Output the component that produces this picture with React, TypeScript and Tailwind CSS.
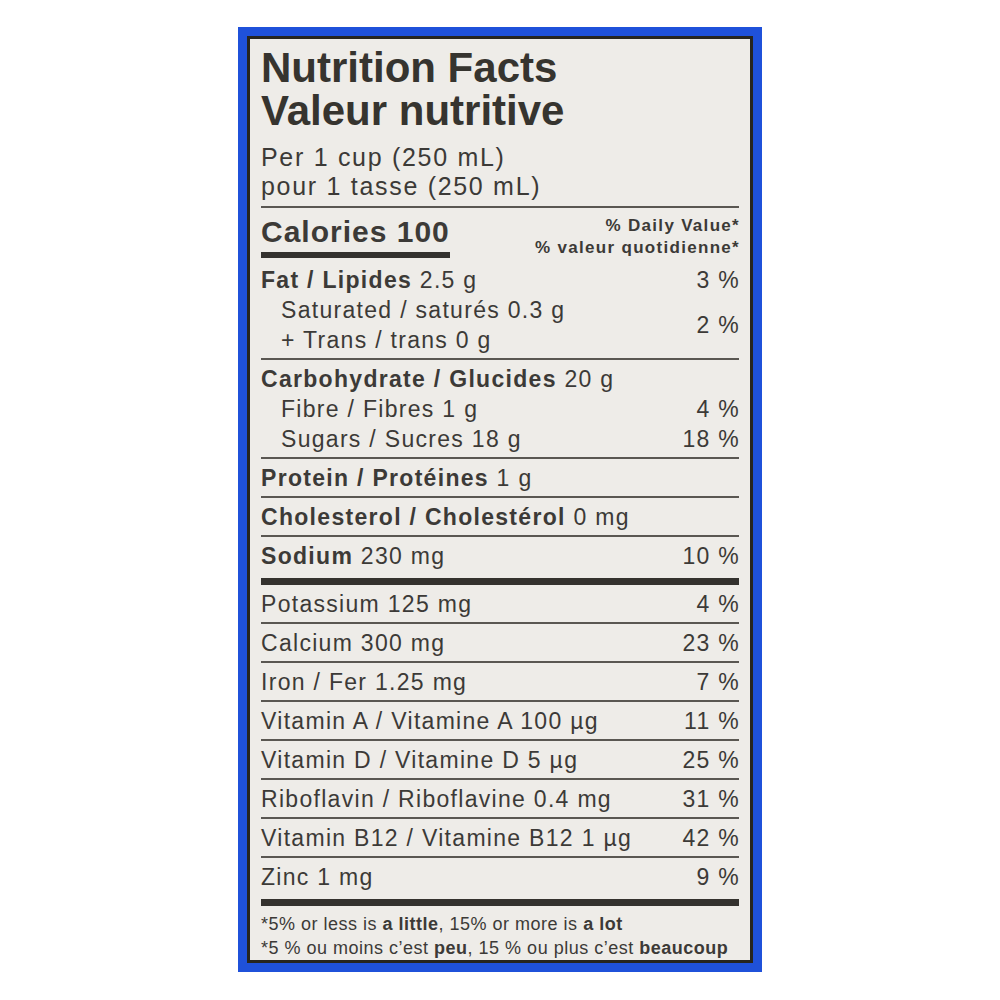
import React from 'react';

type Nutrient = {
  label: string;
  dv?: string;
};

const minerals: Nutrient[] = [
  { label: 'Potassium 125 mg', dv: '4 %' },
  { label: 'Calcium 300 mg', dv: '23 %' },
  { label: 'Iron / Fer 1.25 mg', dv: '7 %' },
  { label: 'Vitamin A / Vitamine A 100 µg', dv: '11 %' },
  { label: 'Vitamin D / Vitamine D 5 µg', dv: '25 %' },
  { label: 'Riboflavin / Riboflavine 0.4 mg', dv: '31 %' },
  { label: 'Vitamin B12 / Vitamine B12 1 µg', dv: '42 %' },
];

const body = 'text-[23px] leading-[30px] tracking-[1.3px]';

function Row({ children, dv, thick }: { children: React.ReactNode; dv?: string; thick?: boolean }) {
  return (
    <div
      className={
        thick
          ? 'flex justify-between pt-[4px] pb-[7px] border-b-[7px] border-[#34322e]'
          : 'flex justify-between pt-[4px] pb-[3px] border-b-2 border-[#5a5752]'
      }
    >
      <div className={body}>{children}</div>
      {dv && <div className={`${body} text-right -mr-[1px]`}>{dv}</div>}
    </div>
  );
}

export default function App() {
  return (
    <div className="min-h-screen bg-white flex justify-center pt-[27px] font-['Liberation_Sans',Arial,sans-serif] text-[#3c3a37]">
      <div className="w-[524px] h-[945px] bg-[#1f51da] p-[9px]">
        <div className="h-full border-[3px] border-[#27251f] bg-[#eeece8] px-[11px] pt-[7px]">
          {/* titre + portion */}
          <div className="pb-[5px] border-b-2 border-[#5a5752]">
            <h1 className="text-[42px] leading-[43px] font-bold text-[#36342f]">
              Nutrition Facts
              <br />
              Valeur nutritive
            </h1>
            <p className="mt-[11px] text-[25px] leading-[29px] tracking-[1.7px]">
              Per 1 cup (250 mL)
              <br />
              pour 1 tasse (250 mL)
            </p>
          </div>

          {/* calories */}
          <div className="mt-[7px] flex justify-between items-start">
            <div className="flex flex-col">
              <span className="text-[30px] leading-[34px] font-bold tracking-[1px]">Calories 100</span>
              <div className="mt-[3px] h-[6px] bg-[#34322e]" />
            </div>
            <div className="text-right text-[17px] leading-[22px] font-bold tracking-[1.3px] -mr-[1px]">
              % Daily Value*
              <br />% valeur quotidienne*
            </div>
          </div>

          {/* lipides */}
          <div className="pt-[6px] pb-[3px] border-b-2 border-[#5a5752]">
            <div className="flex justify-between">
              <div className={body}>
                <span className="font-bold">Fat / Lipides</span> 2.5 g
              </div>
              <div className={`${body} -mr-[1px]`}>3 %</div>
            </div>
            <div className="flex justify-between items-center">
              <div className={`${body} pl-[20px]`}>
                Saturated / saturés 0.3 g
                <br />+ Trans / trans 0 g
              </div>
              <div className={`${body} -mr-[1px]`}>2 %</div>
            </div>
          </div>

          {/* glucides */}
          <div className="pt-[4px] pb-[3px] border-b-2 border-[#5a5752]">
            <div className={body}>
              <span className="font-bold">Carbohydrate / Glucides</span> 20 g
            </div>
            <div className="flex justify-between">
              <div className={`${body} pl-[20px]`}>Fibre / Fibres 1 g</div>
              <div className={`${body} -mr-[1px]`}>4 %</div>
            </div>
            <div className="flex justify-between">
              <div className={`${body} pl-[20px]`}>Sugars / Sucres 18 g</div>
              <div className={`${body} -mr-[1px]`}>18 %</div>
            </div>
          </div>

          <Row>
            <span className="font-bold">Protein / Protéines</span> 1 g
          </Row>
          <Row>
            <span className="font-bold">Cholesterol / Cholestérol</span> 0 mg
          </Row>
          <Row dv="10 %" thick>
            <span className="font-bold">Sodium</span> 230 mg
          </Row>

          {minerals.map((m) => (
            <Row key={m.label} dv={m.dv}>
              {m.label}
            </Row>
          ))}
          <Row dv="9 %" thick>
            Zinc 1 mg
          </Row>

          {/* notes */}
          <div className="pt-[6px] text-[18px] leading-[24px] tracking-[0.5px]">
            <p>
              *5% or less is <span className="font-bold">a little</span>, 15% or more is{' '}
              <span className="font-bold">a lot</span>
            </p>
            <p>
              *5 % ou moins c’est <span className="font-bold">peu</span>, 15 % ou plus c’est{' '}
              <span className="font-bold">beaucoup</span>
            </p>
          </div>
        </div>
      </div>
    </div>
  );
}
